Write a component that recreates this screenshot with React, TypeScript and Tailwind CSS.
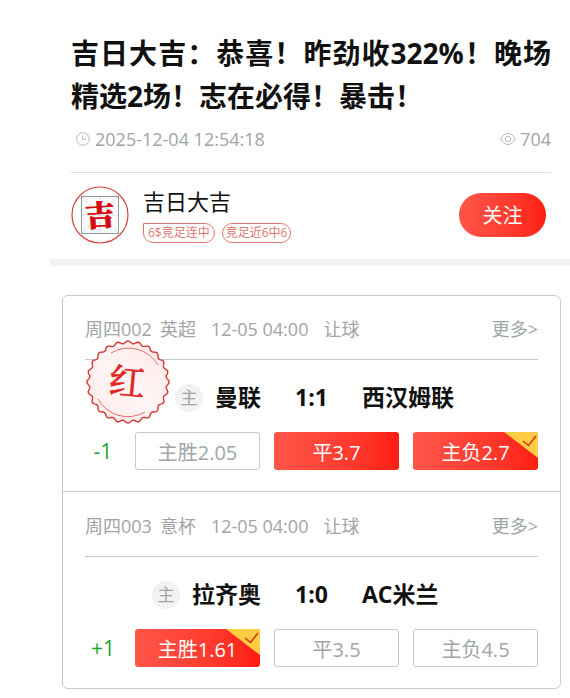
import clsx from 'clsx';

type Odd = { label: string; picked?: boolean; hit?: boolean };

type Match = {
  id: string;
  league: string;
  time: string;
  play: string;
  home: string;
  away: string;
  score: string;
  handicap: string;
  odds: Odd[];
  won?: boolean;
};

const matches: Match[] = [
  {
    id: '周四002',
    league: '英超',
    time: '12-05 04:00',
    play: '让球',
    home: '曼联',
    away: '西汉姆联',
    score: '1:1',
    handicap: '-1',
    won: true,
    odds: [
      { label: '主胜2.05' },
      { label: '平3.7', picked: true },
      { label: '主负2.7', picked: true, hit: true },
    ],
  },
  {
    id: '周四003',
    league: '意杯',
    time: '12-05 04:00',
    play: '让球',
    home: '拉齐奥',
    away: 'AC米兰',
    score: '1:0',
    handicap: '+1',
    odds: [
      { label: '主胜1.61', picked: true, hit: true },
      { label: '平3.5' },
      { label: '主负4.5' },
    ],
  },
];

function ClockIcon() {
  return (
    <svg className="size-4" viewBox="0 0 16 16" fill="none" stroke="#b4b8b8" aria-hidden="true">
      <circle cx="8" cy="8" r="6.3" />
      <path d="M7.5 4.5V8.5H11" />
    </svg>
  );
}

function EyeIcon() {
  return (
    <svg className="size-4" viewBox="0 0 16 16" fill="none" stroke="#b4b8b8" aria-hidden="true">
      <path d="M0.6 8C4.4 0.7 11.6 0.7 15.4 8C11.6 15.3 4.4 15.3 0.6 8Z" />
      <circle cx="8" cy="8" r="2.8" />
    </svg>
  );
}

function Avatar() {
  return (
    <svg className="size-[58px] shrink-0" viewBox="0 0 58 58" role="img" aria-label="吉日大吉">
      <circle cx="29" cy="29" r="28" fill="#fff" stroke="#d8403c" strokeWidth="1.2" />
      <rect x="10.5" y="10.5" width="37" height="37" fill="#f6f9f8" stroke="#929b9b" />
      <path d="M11 11L47 47M47 11L11 47M29 11V47M11 29H47" stroke="#cfd6d6" strokeDasharray="3 2" />
      <text
        x="29"
        y="40"
        textAnchor="middle"
        fontFamily="'Noto Serif CJK SC', 'Noto Sans CJK SC', serif"
        fontSize="29"
        fontWeight="900"
        fill="#d7080f"
        stroke="#d7080f"
        strokeWidth="0.8"
        transform="rotate(-4 29 29)"
      >
        吉
      </text>
    </svg>
  );
}

// Scalloped outline of the stamp
function stampPath(teeth: number, radius: number, depth: number) {
  const steps = teeth * 12;
  const points: string[] = [];
  for (let i = 0; i < steps; i++) {
    const angle = (i / steps) * Math.PI * 2 - Math.PI / 2;
    const r = radius + depth * Math.cos((i / 12) * Math.PI * 2);
    points.push(`${(42 + r * Math.cos(angle)).toFixed(2)} ${(42 + r * Math.sin(angle)).toFixed(2)}`);
  }
  return `M${points.join('L')}Z`;
}

function Stamp() {
  return (
    <svg className="absolute top-11 left-[23px] size-[84px]" viewBox="0 0 84 84" role="img" aria-label="红">
      <defs>
        <linearGradient id="stamp" x1="1" y1="0" x2="0" y2="1">
          <stop offset="0" stopColor="#ffe9e9" />
          <stop offset="0.5" stopColor="#fff3f3" />
          <stop offset="1" stopColor="#ffe9e9" />
        </linearGradient>
      </defs>
      <path d={stampPath(24, 39.8, 1.3)} fill="url(#stamp)" fillOpacity="0.92" stroke="#d8342e" strokeWidth="1.4" />
      <path d="M25 13A34 34 0 0 1 72 25M12 59A34 34 0 0 0 59 72" fill="none" stroke="#dc4a44" strokeWidth="0.8" />
      <text
        x="41"
        y="55"
        textAnchor="middle"
        fontFamily="'Noto Serif CJK SC', 'Noto Sans CJK SC', serif"
        fontSize="36"
        fill="#e3251f"
        stroke="#e3251f"
        strokeWidth="0.7"
        transform="rotate(5 42 42)"
      >
        红
      </text>
    </svg>
  );
}

function OddButton({ label, picked, hit }: Odd) {
  return (
    <button
      type="button"
      className={clsx(
        'relative flex h-[38px] items-center justify-center overflow-hidden rounded-[3px] pt-[3px] text-xl',
        picked
          ? 'bg-linear-to-r from-[#ff5549] to-[#ff1c10] text-white'
          : 'border border-[#c6caca] bg-white text-[#a0a5a5]',
      )}
    >
      {label}
      {hit && (
        <svg className="absolute top-0 right-0 h-[26px] w-[34px]" viewBox="0 0 34 26" aria-hidden="true">
          <path d="M0 0H34V26Z" fill="#ffcd42" />
          <path d="M19 9L24.5 13.5L32 4" fill="none" stroke="#d9300f" strokeWidth="1.5" />
        </svg>
      )}
    </button>
  );
}

function MatchCard({ match }: { match: Match }) {
  return (
    <section className="relative border-b border-[#c6caca] px-[22px] pb-[21px] last:border-b-0 last:pt-px">
      <div className="flex h-16 items-center justify-between border-b border-[#c6caca] pt-[3px] text-[18px] text-[#a0a5a5]">
        <div className="flex">
          <span>{match.id}</span>
          <span className="ml-2">{match.league}</span>
          <span className="ml-[15px]">{match.time}</span>
          <span className="ml-[15px]">{match.play}</span>
        </div>
        <a href="#more">更多&gt;</a>
      </div>

      <div className="grid h-[72px] grid-cols-[1fr_101px_1fr] items-center pt-[3px] text-[23px] font-bold text-[#111]">
        <div className="flex items-center justify-end gap-3">
          <span className="flex size-7 items-center justify-center rounded-full bg-[#f2f2f2] text-[17px] font-normal text-[#a0a5a5]">
            主
          </span>
          <span>{match.home}</span>
        </div>
        <span className="text-center">{match.score}</span>
        <span>{match.away}</span>
      </div>

      <div className="grid grid-cols-[36px_1fr_1fr_1fr] items-center gap-[14px]">
        <span className="pt-[2px] text-center text-[21px] text-[#1ea82a]">{match.handicap}</span>
        {match.odds.map((odd) => (
          <OddButton key={odd.label} {...odd} />
        ))}
      </div>

      {match.won && <Stamp />}
    </section>
  );
}

export default function App() {
  return (
    <main className="bg-white pl-[50px] font-['Open_Sans','Noto_Sans_CJK_SC',sans-serif]" lang="zh-CN">
      <header className="pt-8 pr-[19px] pl-[21px]">
        <h1 className="text-justify text-[28px] leading-[43px] font-bold text-[#111]">
          吉日大吉：恭喜！昨劲收322%！晚场精选2场！志在必得！暴击！
        </h1>

        <div className="mt-[7px] flex justify-between border-b border-[#dedede] pb-[19px] pl-1 text-[18px] leading-7 text-[#a0a5a5]">
          <span className="flex items-center gap-1">
            <ClockIcon />
            2025-12-04 12:54:18
          </span>
          <span className="flex items-center gap-1">
            <EyeIcon />
            704
          </span>
        </div>

        <div className="flex items-center pt-[13px] pb-[15px]">
          <Avatar />
          <div className="ml-[14px] flex-1">
            <div className="text-[22px] leading-7 text-[#111]">吉日大吉</div>
            <div className="mt-2 flex gap-[7px] text-xs leading-[18px] text-[#e2766f]">
              <span className="rounded-[10px] rounded-tl-none border border-[#e2766f] px-1">6$竞足连中</span>
              <span className="rounded-[10px] border border-[#e2766f] px-[3px]">竞足近6中6</span>
            </div>
          </div>
          <button
            type="button"
            className="mr-[5px] h-11 w-[87px] rounded-full bg-linear-to-r from-[#ff5549] to-[#ff1c10] pt-[2px] text-xl text-white"
          >
            关注
          </button>
        </div>
      </header>

      <div className="h-[7px] bg-[#f3f3f3]" />

      <div className="mt-[29px] mr-[9px] mb-[9px] ml-3 rounded-md border border-[#c6caca]">
        {matches.map((match) => (
          <MatchCard key={match.id} match={match} />
        ))}
      </div>
    </main>
  );
}
